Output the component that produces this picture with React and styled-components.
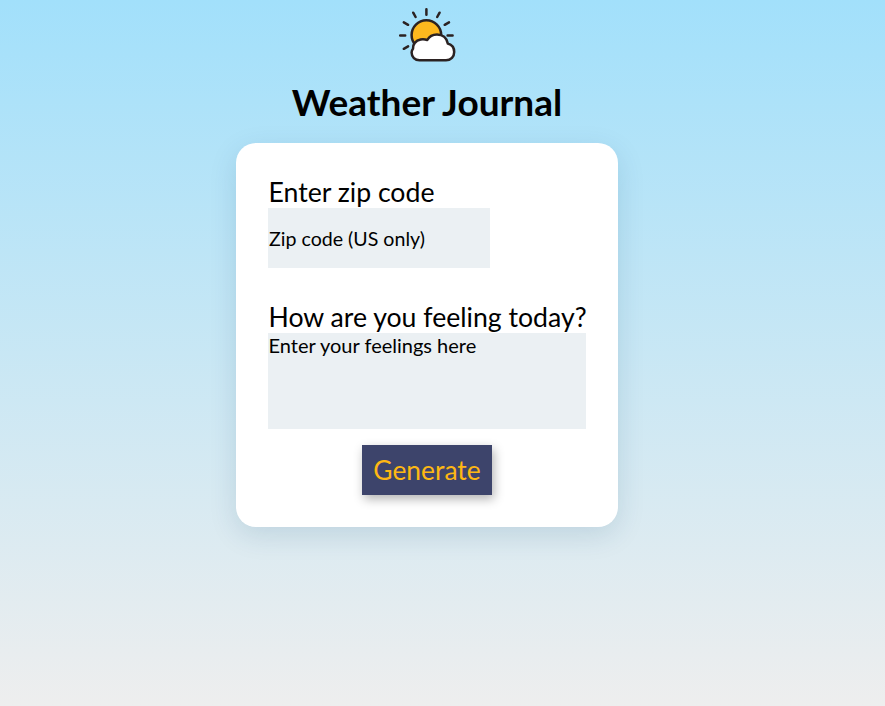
import React from "react";
import styled, { createGlobalStyle } from "styled-components";

const GlobalStyle = createGlobalStyle`
  * { box-sizing: border-box; }
  html { height: 100%; }
  body {
    margin: 0;
    min-height: 100vh;
    overflow: hidden;
    font-family: Lato, sans-serif;
    color: #000;
    background: linear-gradient(to bottom, #a2e0fb, #eee);
  }
`;

const Page = styled.div`
  width: 854px;
  height: 706px;
  display: flex;
  flex-direction: column;
  align-items: center;
`;

const Logo = styled.svg`
  display: block;
  width: 64px;
  height: 64px;
  margin-top: 3px;
  flex: none;
`;

const Title = styled.h1`
  margin: 12px 0 0;
  font-size: 37px;
  line-height: 45px;
  font-weight: 700;
  white-space: nowrap;
`;

const Card = styled.form`
  width: 382px;
  height: 384px;
  margin-top: 19px;
  padding: 32px;
  display: flex;
  flex-direction: column;
  background: #fff;
  border-radius: 20px;
  box-shadow: 0 8px 28px rgba(0, 60, 100, 0.13);
`;

const Label = styled.label`
  padding: 2px 0 0 0.5px;
  font-size: 26.65px;
  line-height: 31px;
  white-space: nowrap;
`;

const fieldStyle = `
  display: block;
  border: 0;
  outline: 0;
  background: #ebf0f3;
  font-family: Lato, sans-serif;
  color: #000;
  &::placeholder { color: #000; opacity: 1; }
`;

const ZipInput = styled.input`
  ${fieldStyle}
  width: 222px;
  height: 60px;
  margin-bottom: 32px;
  padding: 1px;
  font-size: 19.6px;
`;

const FeelingsInput = styled.textarea`
  ${fieldStyle}
  width: 318px;
  height: 96px;
  padding: 0 0 0 0.5px;
  resize: none;
  font-size: 20px;
  line-height: 24px;
`;

const GenerateButton = styled.button`
  align-self: center;
  width: 130px;
  height: 50px;
  margin-top: 16px;
  padding: 0 0 1px;
  border: 0;
  background: #3d446b;
  color: #fdb813;
  font-family: Lato, sans-serif;
  font-size: 26.4px;
  box-shadow: 2px 4px 10px rgba(0, 0, 0, 0.3);
`;

function WeatherIcon() {
  return (
    <Logo viewBox="395 3 64 64" fill="none" stroke="#2b2222" strokeWidth="2.5" strokeLinecap="round">
      <circle cx="426.4" cy="35" r="14.8" fill="#fdb81e" />
      <path d="M426.4 9.3v5.4M413.2 12.7l2.4 4.3M439.6 12.7l-2.4 4.3M403.8 22.4l4.3 2.4M449 22.4l-4.3 2.4M400.2 35.4h5M447.6 35.4h5M403.8 48.8l4.3-2.4" />
      <path d="M419.5 60.2H446C451 60.2 454.2 56.5 454.2 52C454.2 47.6 451.6 44.6 447.8 43.5C446.8 37.8 442.5 34.4 437 34.4C432.6 34.4 429.3 36.3 427.3 40C425.2 39.3 423 39 420.6 39.5C415.6 40.5 412.6 44.4 413 48.8C412 50 411.6 51.2 411.6 52.5C411.6 57 415 60.2 419.5 60.2Z" fill="#fff" strokeLinejoin="round" />
    </Logo>
  );
}

export default function App() {
  return (
    <>
      <GlobalStyle />
      <Page>
        <WeatherIcon />
        <Title>Weather Journal</Title>
        <Card>
          <Label htmlFor="zip">Enter zip code</Label>
          <ZipInput id="zip" placeholder="Zip code (US only)" />
          <Label htmlFor="feelings">How are you feeling today?</Label>
          <FeelingsInput id="feelings" placeholder="Enter your feelings here" />
          <GenerateButton type="button">Generate</GenerateButton>
        </Card>
      </Page>
    </>
  );
}
